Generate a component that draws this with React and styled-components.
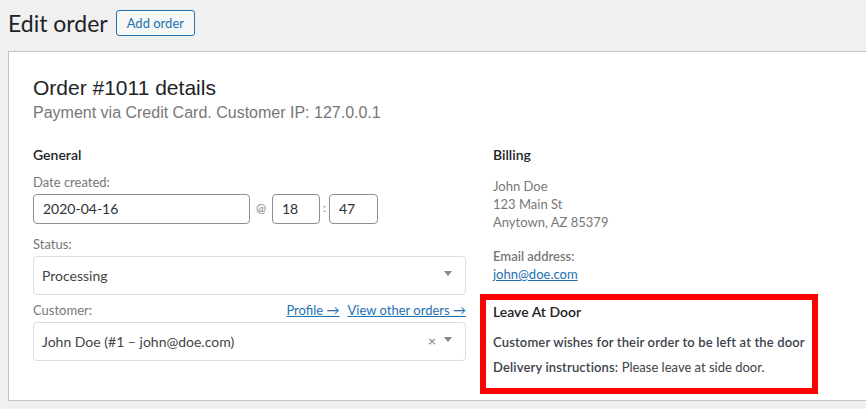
import React from "react";
import styled, { createGlobalStyle } from "styled-components";

const GlobalStyle = createGlobalStyle`
  html, body {
    margin: 0;
    padding: 0;
    overflow: hidden;
    background: #f0f0f1;
  }
  body {
    font-family: "Lato", "Liberation Sans", sans-serif;
    color: #3c434a;
    font-size: 13px;
  }
`;

const Page = styled.div`
  padding: 10px 0 0 8px;
`;

const Header = styled.div`
  display: flex;
  align-items: center;
  height: 26px;
`;

const Title = styled.h1`
  margin: 0 8px 0 0;
  font-size: 23px;
  font-weight: 400;
  line-height: 26px;
  color: #1d2327;
`;

const AddButton = styled.a`
  display: inline-flex;
  align-items: center;
  box-sizing: border-box;
  height: 26px;
  padding: 0 10px;
  border: 1px solid #2271b1;
  border-radius: 3px;
  background: #f6f7f7;
  color: #2271b1;
  font-size: 13px;
  text-decoration: none;
`;

const Panel = styled.div`
  margin-top: 15px;
  width: 1402px;
  box-sizing: border-box;
  height: 350px;
  background: #fff;
  border: 1px solid #c3c4c7;
  padding: 23px 24px 12px;
`;

const OrderTitle = styled.h2`
  margin: 0;
  font-family: "Liberation Sans", Arial, sans-serif;
  font-size: 21px;
  font-weight: 400;
  line-height: 1.2;
  color: #1d2327;
`;

const OrderMeta = styled.p`
  margin: 0;
  font-family: "Liberation Sans", Arial, sans-serif;
  font-size: 16px;
  line-height: 1.6;
  color: #777;
`;

const Columns = styled.div`
  display: grid;
  grid-template-columns: 433px 433px;
  column-gap: 27px;
  margin-top: 19px;
`;

const Column = styled.div`
  display: flex;
  flex-direction: column;
`;

const SectionTitle = styled.h3`
  margin: 0;
  font-size: 14px;
  font-weight: 600;
  line-height: 20px;
  color: #1d2327;
`;

const Field = styled.div`
  margin-top: ${(p) => p.$top}px;
`;

const LabelRow = styled.div`
  display: flex;
  justify-content: space-between;
  align-items: baseline;
  margin-bottom: 3px;
`;

const Label = styled.label`
  font-size: 13px;
  line-height: 18px;
  color: #777;
`;

const Links = styled.div`
  display: flex;
  gap: 8px;
`;

const TextLink = styled.a`
  font-size: 13px;
  line-height: 18px;
  color: #2271b1;
  text-decoration: underline;
`;

const DateRow = styled.div`
  display: flex;
  align-items: center;
`;

const Input = styled.div`
  box-sizing: border-box;
  width: ${(p) => p.$w}px;
  height: 30px;
  display: flex;
  align-items: center;
  padding-left: 9px;
  border: 1px solid #8c8f94;
  border-radius: 4px;
  font-size: 14px;
  color: #2c3338;
`;

const Sep = styled.span`
  width: ${(p) => p.$w}px;
  text-align: center;
  font-size: 12px;
  color: #777;
  align-self: flex-start;
  margin-top: 6px;
`;

const Select = styled.div`
  box-sizing: border-box;
  height: 39px;
  display: flex;
  align-items: center;
  padding: 0 8px;
  border: 1px solid #ddd;
  border-radius: 4px;
  font-size: 14px;
  color: #444;
`;

const SelectValue = styled.span`
  flex: 1;
`;

const Clear = styled.span`
  color: #999;
  font-size: 14px;
  font-weight: 700;
  margin-right: 8px;
  margin-top: -2px;
`;

const Caret = styled.span`
  width: 0;
  height: 0;
  border-left: 4px solid transparent;
  border-right: 4px solid transparent;
  border-top: 5px solid #888;
  margin-right: 5px;
  margin-top: -3px;
`;

const Address = styled.p`
  margin: 12px 0 0;
  font-size: 13px;
  line-height: 18.3px;
  color: #777;
`;

const EmailLabel = styled.p`
  margin: 15px 0 0;
  font-size: 13px;
  line-height: 18px;
  font-weight: 600;
  color: #777;
`;

const Highlight = styled.div`
  box-sizing: border-box;
  width: 338px;
  margin: 11px 0 0 -13px;
  border: 6px solid #ff0000;
  padding: 2px 7px 12px;
  color: #3c434a;
`;

const HighlightTitle = styled.h4`
  margin: 0;
  font-size: 14px;
  font-weight: 600;
  line-height: 20px;
  color: #1d2327;
`;

const Line = styled.p`
  margin: ${(p) => p.$top}px 0 0;
  font-size: 13px;
  line-height: 18px;
  font-weight: ${(p) => (p.$bold ? 600 : 400)};
  letter-spacing: ${(p) => (p.$bold ? "0.15px" : "0")};
`;

const Strong = styled.strong`
  font-weight: 600;
  letter-spacing: 0.15px;
`;

export default function App() {
  return (
    <>
      <GlobalStyle />
      <Page>
        <Header>
          <Title>Edit order</Title>
          <AddButton href="#">Add order</AddButton>
        </Header>
        <Panel>
          <OrderTitle>Order #1011 details</OrderTitle>
          <OrderMeta>Payment via Credit Card. Customer IP: 127.0.0.1</OrderMeta>
          <Columns>
            <Column>
              <SectionTitle>General</SectionTitle>
              <Field $top={8}>
                <LabelRow>
                  <Label>Date created:</Label>
                </LabelRow>
                <DateRow>
                  <Input $w={217}>2020-04-16</Input>
                  <Sep $w={22}>@</Sep>
                  <Input $w={48}>18</Input>
                  <Sep $w={9}>:</Sep>
                  <Input $w={49}>47</Input>
                </DateRow>
              </Field>
              <Field $top={11}>
                <LabelRow>
                  <Label>Status:</Label>
                </LabelRow>
                <Select>
                  <SelectValue>Processing</SelectValue>
                  <Caret />
                </Select>
              </Field>
              <Field $top={6}>
                <LabelRow>
                  <Label>Customer:</Label>
                  <Links>
                    <TextLink href="#">Profile →</TextLink>
                    <TextLink href="#">View other orders →</TextLink>
                  </Links>
                </LabelRow>
                <Select>
                  <SelectValue>John Doe (#1 – john@doe.com)</SelectValue>
                  <Clear>×</Clear>
                  <Caret />
                </Select>
              </Field>
            </Column>
            <Column>
              <SectionTitle>Billing</SectionTitle>
              <Address>
                John Doe
                <br />
                123 Main St
                <br />
                Anytown, AZ 85379
              </Address>
              <EmailLabel>Email address:</EmailLabel>
              <div>
                <TextLink href="#">john@doe.com</TextLink>
              </div>
              <Highlight>
                <HighlightTitle>Leave At Door</HighlightTitle>
                <Line $top={11} $bold>
                  Customer wishes for their order to be left at the door
                </Line>
                <Line $top={7}>
                  <Strong>Delivery instructions:</Strong> Please leave at side door.
                </Line>
              </Highlight>
            </Column>
          </Columns>
        </Panel>
      </Page>
    </>
  );
}
